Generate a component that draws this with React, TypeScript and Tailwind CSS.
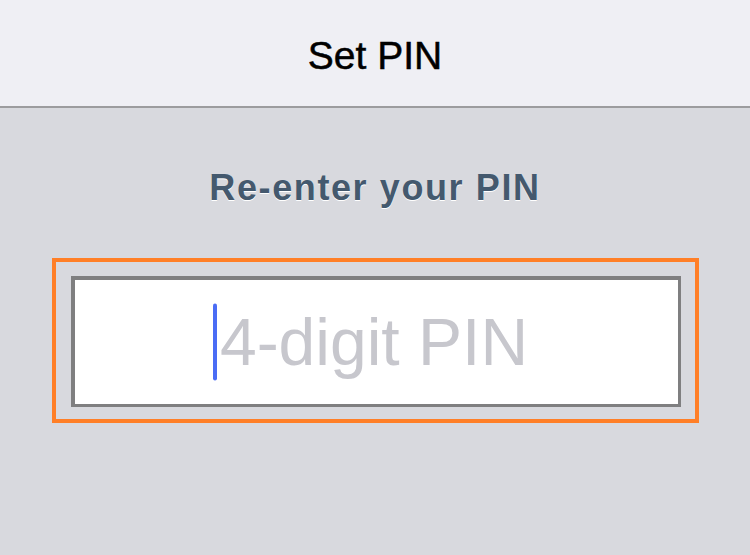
export default function App() {
  return (
    <div
      className="min-h-[555px] w-[750px] bg-[#d8d9de] flex flex-col"
      style={{ fontFamily: '"Liberation Sans", Arial, sans-serif' }}
    >
      <header className="h-[108px] shrink-0 bg-[#efeff4] border-b-[2px] border-[#9c9c9e] flex items-center justify-center pt-[6px]">
        <h1 className="text-[39px] leading-[1.15] text-black [-webkit-text-stroke:0.5px_#000]">Set PIN</h1>
      </header>

      <main className="flex flex-col items-center">
        <h2 className="mt-[60px] text-[36px] leading-[40px] font-bold tracking-[1.6px] text-[#44596e] [text-shadow:0_1px_0_#ffffff]">
          Re-enter your PIN
        </h2>

        <div className="mt-[50px] w-[647px] h-[165px] border-[4px] border-[#ff7f27] pl-[15px] pr-[14px] pt-[14px] pb-[12px]">
          <div className="h-full w-full bg-white border-t-[4px] border-l-[4px] border-r-[3px] border-b-[3px] border-[#7f7f80] flex items-center justify-center">
            <span className="relative text-[66px] leading-none text-[#c7c7cd] pr-[4px]">
              <span className="absolute left-[-7px] top-1/2 -translate-y-1/2 h-[77px] w-[4px] rounded-full bg-[#4a6cf5]" />
              4-digit PIN
            </span>
          </div>
        </div>
      </main>
    </div>
  );
}
